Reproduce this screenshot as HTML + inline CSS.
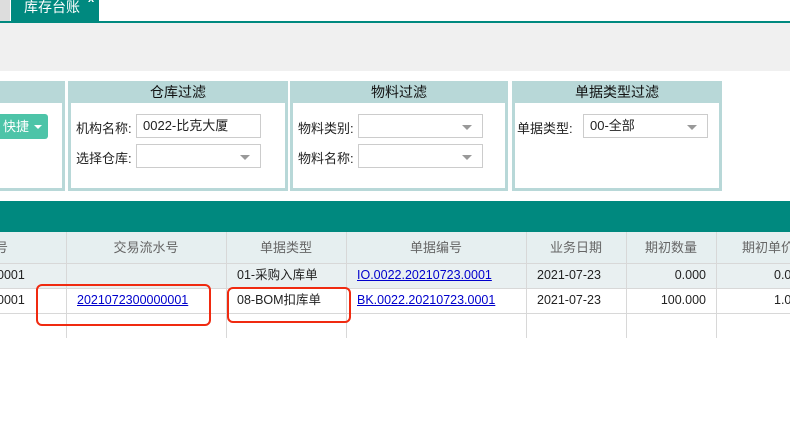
<html><head><style>
body{margin:0;width:790px;height:425px;overflow:hidden;background:#fff;font-family:"Liberation Sans","Noto Sans CJK SC",sans-serif;font-size:12px;color:#222;position:relative}
.a{position:absolute}
.panel{position:absolute;top:81px;height:110px;background:#b8d8d8}
.panel .h{height:22px;line-height:22px;text-align:center;font-size:14px;color:#111}
.panel .b{position:absolute;left:3px;right:3px;top:22px;bottom:3px;background:#fff}
.inp{position:absolute;height:24px;border:1px solid #ccc;background:#fff;box-sizing:border-box;line-height:22px;padding-left:6px;font-size:13px}
.arr{position:absolute;right:10px;top:10px;border-left:5px solid transparent;border-right:5px solid transparent;border-top:5px solid #999}
.lbl{position:absolute;font-size:13px}
.vl{position:absolute;top:232px;width:1px;height:106px;background:#d8d8d8}
.hl{position:absolute;left:0;width:790px;height:1px;background:#d8d8d8}
.th{position:absolute;top:232px;height:31px;line-height:31px;color:#666;text-align:center;font-size:13px}
.c{position:absolute;line-height:25px;font-size:12.5px}
a{color:#00c;text-decoration:underline}
.red{position:absolute;border:2px solid #f02a10;border-radius:6px}
</style></head><body>
<div class="a" style="left:0;top:0;width:10px;height:21px;background:#ddd"></div>
<div class="a" style="left:11px;top:0;width:88px;height:21px;background:#00897f;color:#fff;font-size:14px;line-height:15px;padding-left:13px;box-sizing:border-box">库存台账</div>
<div class="a" style="left:88px;top:-7px;color:#fff;font-size:11px;font-weight:bold">x</div>
<div class="a" style="left:0;top:21px;width:790px;height:2px;background:#00897f"></div>
<div class="a" style="left:0;top:23px;width:790px;height:48px;background:#f0f0f0"></div>

<div class="panel" style="left:-10px;width:75px"><div class="b">
<div class="a" style="left:0;top:11px;width:55px;height:25px;background:#4dc4a8;border-radius:3px;color:#fff;line-height:25px;padding-left:10px;box-sizing:border-box;font-size:13px">快捷<span class="a" style="right:6px;top:11px;border-left:4px solid transparent;border-right:4px solid transparent;border-top:4px solid #fff"></span></div></div></div>

<div class="panel" style="left:68px;width:220px"><div class="h">仓库过滤</div><div class="b">
<div class="lbl" style="left:5px;top:15px">机构名称:</div><div class="inp" style="left:65px;top:11px;width:125px">0022-比克大厦</div>
<div class="lbl" style="left:5px;top:45px">选择仓库:</div><div class="inp" style="left:65px;top:41px;width:125px"><div class="arr"></div></div>
</div></div>

<div class="panel" style="left:290px;width:218px"><div class="h">物料过滤</div><div class="b">
<div class="lbl" style="left:5px;top:15px">物料类别:</div><div class="inp" style="left:65px;top:11px;width:125px"><div class="arr"></div></div>
<div class="lbl" style="left:5px;top:45px">物料名称:</div><div class="inp" style="left:65px;top:41px;width:125px"><div class="arr"></div></div>
</div></div>

<div class="panel" style="left:512px;width:210px"><div class="h">单据类型过滤</div><div class="b">
<div class="lbl" style="left:2px;top:15px">单据类型:</div><div class="inp" style="left:68px;top:11px;width:125px">00-全部<div class="arr"></div></div>
</div></div>

<div class="a" style="left:0;top:201px;width:790px;height:31px;background:#00897f"></div>
<div class="a" style="left:0;top:232px;width:790px;height:31px;background:#e6eff0"></div>
<div class="a" style="left:0;top:263px;width:790px;height:25px;background:#e9f0f1"></div>
<div class="hl" style="top:263px"></div><div class="hl" style="top:288px"></div><div class="hl" style="top:313px"></div>
<div class="vl" style="left:66px"></div><div class="vl" style="left:226px"></div><div class="vl" style="left:346px"></div><div class="vl" style="left:526px"></div><div class="vl" style="left:626px"></div><div class="vl" style="left:716px"></div>

<div class="th" style="left:-5px">号</div>
<div class="th" style="left:66px;width:160px">交易流水号</div>
<div class="th" style="left:226px;width:120px">单据类型</div>
<div class="th" style="left:346px;width:180px">单据编号</div>
<div class="th" style="left:526px;width:100px">业务日期</div>
<div class="th" style="left:626px;width:90px">期初数量</div>
<div class="th" style="left:742px;white-space:nowrap">期初单价</div>

<div class="c" style="left:-3px;top:263px">0001</div>
<div class="c" style="left:237px;top:263px">01-采购入库单</div>
<div class="c" style="left:357px;top:263px"><a>IO.0022.20210723.0001</a></div>
<div class="c" style="left:537px;top:263px">2021-07-23</div>
<div class="c" style="left:626px;width:80px;text-align:right;top:263px">0.000</div>
<div class="c" style="left:774px;top:263px">0.0</div>

<div class="c" style="left:-3px;top:288px">0001</div>
<div class="c" style="left:77px;top:288px"><a>2021072300000001</a></div>
<div class="c" style="left:237px;top:288px">08-BOM扣库单</div>
<div class="c" style="left:357px;top:288px"><a>BK.0022.20210723.0001</a></div>
<div class="c" style="left:537px;top:288px">2021-07-23</div>
<div class="c" style="left:626px;width:80px;text-align:right;top:288px">100.000</div>
<div class="c" style="left:774px;top:288px">1.0</div>

<div class="red" style="left:36px;top:284px;width:171px;height:38px"></div>
<div class="red" style="left:227px;top:287px;width:120px;height:32px"></div>
</body></html>
